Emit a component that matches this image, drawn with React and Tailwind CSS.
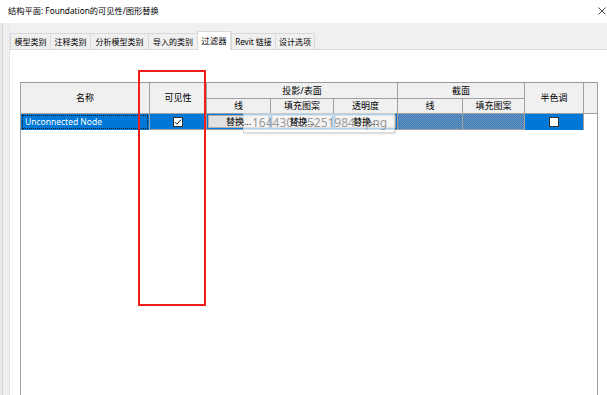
import { useState } from "react";

const tabs = [
  { label: "模型类别", w: "w-[40px]" },
  { label: "注释类别", w: "w-[40px]" },
  { label: "分析模型类别", w: "w-[58px]" },
  { label: "导入的类别", w: "w-[49px]" },
  { label: "过滤器", w: "w-[34px]", active: true },
  { label: "Revit 链接", w: "w-[44px]" },
  { label: "设计选项", w: "w-[40px]" },
];

const head = "flex items-center justify-center border-r border-b border-[#a0a0a0] bg-[#f0f0f0] text-[9px] text-black";
const hatch =
  "border-r border-b border-[#a0a0a0] bg-[repeating-conic-gradient(#2a7dcf_0_25%,#7d93a8_0_50%)] bg-[length:2px_2px]";

function CheckBox({ checked }) {
  return (
    <span className="flex h-[10px] w-[10px] items-center justify-center border border-[#333] bg-white">
      {checked && (
        <svg width="8" height="8" viewBox="0 0 8 8">
          <path d="M1 4.2 L3 6.2 L7 1.6" fill="none" stroke="#222" strokeWidth="1" />
        </svg>
      )}
    </span>
  );
}

function ReplaceButton() {
  return (
    <div className="h-full border-r border-b border-[#a0a0a0] bg-[#0078d7] p-px">
      <div className="flex h-full items-center justify-center border border-[#adadad] bg-[#e1e1e1] text-[9px] text-black">
        <span className="relative z-20">替换...</span>
      </div>
    </div>
  );
}

export default function App() {
  const [tab] = useState("过滤器");

  return (
    <div className="relative h-[395px] w-[607px] overflow-hidden bg-white font-['Noto_Sans','Noto_Sans_CJK_SC',sans-serif] text-black">
      {/* title bar */}
      <div className="flex h-[23px] items-center justify-between pl-[8px] pr-[1px]">
        <span className="text-[8.25px]">结构平面: Foundation的可见性/图形替换</span>
        <svg width="8" height="8" viewBox="0 0 8 8" className="mb-[1px]">
          <path d="M0.5 0.5 L7.5 7.5 M7.5 0.5 L0.5 7.5" stroke="#333" strokeWidth="0.9" />
        </svg>
      </div>

      <div className="flex h-[372px]">
        <div className="flex w-[10px] bg-[#f0f0f0]">
          <div className="w-[3px] border-r border-[#d6d6d6] bg-[#e9e9e9]" />
          <div className="flex-1 border-r border-[#e4e4e4]" />
        </div>

        <div className="flex flex-1 flex-col">
          <div className="flex h-[27px] items-end border-b border-[#d9d9d9] bg-[#f0f0f0]">
            {tabs.map((t) =>
              t.label === tab ? (
                <div
                  key={t.label}
                  className={`${t.w} -mb-px flex h-[19px] items-center justify-center border-x border-t border-[#d9d9d9] bg-white text-[8.5px]`}
                >
                  {t.label}
                </div>
              ) : (
                <div
                  key={t.label}
                  className={`${t.w} flex h-[16px] items-center justify-center border-l border-t border-[#d9d9d9] bg-[#f0f0f0] text-[8px] last:border-r`}
                >
                  {t.label}
                </div>
              )
            )}
          </div>

          <div className="flex-1 bg-white pl-[10px] pr-[9px] pt-[32px]">
            <div className="h-full w-[578px] border-x border-t border-x-[#a0a0a0] border-t-[#999]">
              <div className="grid grid-cols-[129px_57px_64px_63px_64px_65px_62px_59px_13px] grid-rows-[16px_15px_16px]">
                <div className={`${head} row-span-2`}>名称</div>
                <div className={`${head} row-span-2`}>可见性</div>
                <div className={`${head} col-span-3`}>投影/表面</div>
                <div className={`${head} col-span-2`}>截面</div>
                <div className={`${head} row-span-2`}>半色调</div>
                <div className="row-span-2 border-b border-[#a0a0a0] bg-[#f0f0f0]" />
                <div className={head}>线</div>
                <div className={head}>填充图案</div>
                <div className={head}>透明度</div>
                <div className={head}>线</div>
                <div className={head}>填充图案</div>

                {/* data row */}
                <div className="border-r border-[#a0a0a0] bg-[#0078d7] p-px">
                  <div className="flex h-full items-center border border-dotted border-[#1a1a1a] pl-[2px] text-[8.5px] text-white">
                    Unconnected Node
                  </div>
                </div>
                <div className="flex items-center justify-center border-r border-b border-[#a0a0a0] bg-[#0078d7]">
                  <CheckBox checked />
                </div>
                <ReplaceButton />
                <ReplaceButton />
                <ReplaceButton />
                <div className={hatch} />
                <div className={hatch} />
                <div className="flex items-center justify-center border-r border-[#a0a0a0] bg-[#0078d7]">
                  <CheckBox />
                </div>
                <div className="bg-white" />
              </div>
            </div>
          </div>
        </div>
      </div>

      {/* drag ghost image */}
      <div className="pointer-events-none absolute left-[243px] top-[113px] z-10 flex h-[20px] w-[152px] items-center border border-[#c8c8c8]/70 bg-white/65 pl-[8px] shadow-[1px_1px_2px_rgba(0,0,0,0.15)]">
        <span className="text-[12px] leading-none text-[#9b9b9b]">1644306252519840.png</span>
      </div>

      {/* red annotation box */}
      <div className="pointer-events-none absolute left-[138px] top-[70px] z-30 h-[236px] w-[68px] border-[2.5px] border-[#f01f1f]" />
    </div>
  );
}
